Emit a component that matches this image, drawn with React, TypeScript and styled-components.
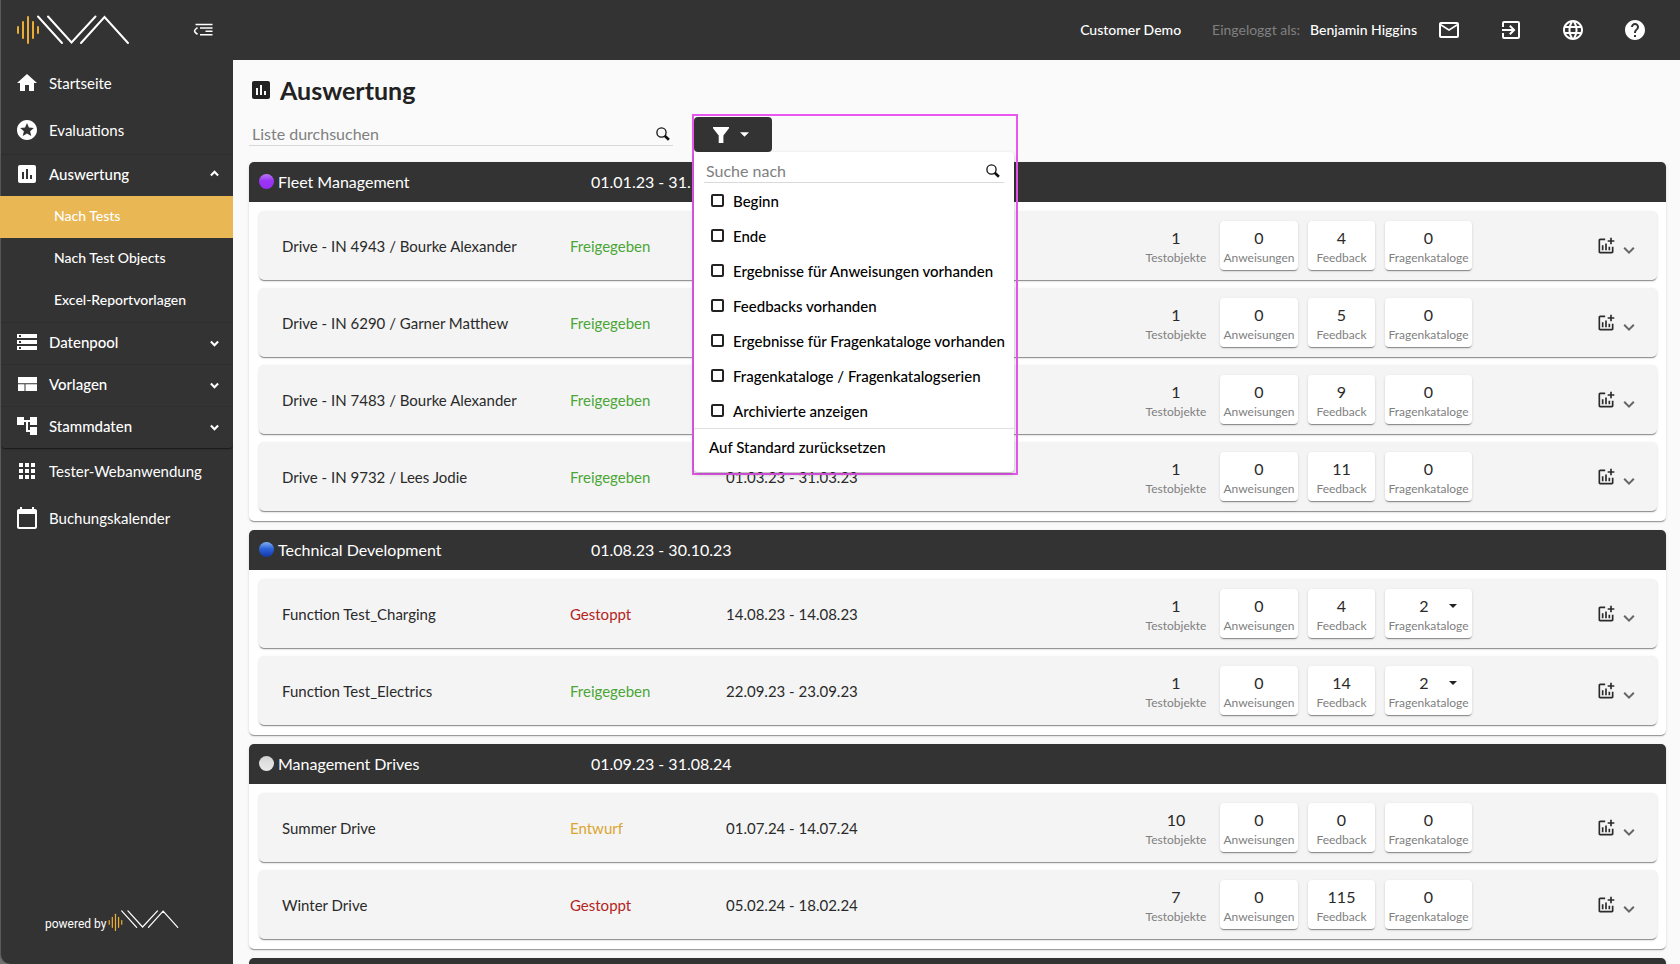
import React from 'react';
import styled, { createGlobalStyle, css } from 'styled-components';
import {
  MdHome, MdStars, MdAssessment, MdStorage, MdAccountTree, MdApps, MdCalendarToday,
  MdMailOutline, MdExitToApp, MdLanguage, MdHelp, MdAddchart,
} from 'react-icons/md';

const dark = '#333333';
const accent = '#e9b754';

const GlobalStyle = createGlobalStyle`
  *, *::before, *::after { box-sizing: border-box; }
  body { margin: 0; background: #fafafa; }
  body, button, input, select { font-family: Lato, "Liberation Sans", sans-serif; }
  ul { list-style: none; margin: 0; padding: 0; }
  svg { display: block; flex: none; }
`;

const bareButton = css`
  border: 0;
  padding: 0;
  background: none;
  color: inherit;
  cursor: pointer;
`;

const Shell = styled.div`
  display: flex;
  height: 100vh;
  overflow: hidden;
  background: #707070;
`;

/* Sidebar */

const Sidebar = styled.aside`
  flex: none;
  width: 233px;
  display: flex;
  flex-direction: column;
  background: ${dark};
  color: #fff;
  border-left: 1px solid #5a5a5a;
  border-bottom-left-radius: 10px;
`;

const Brand = styled.div`
  display: flex;
  align-items: center;
  justify-content: space-between;
  height: 60px;
  padding: 0 20px 0 15px;
`;

const IconButton = styled.button`
  ${bareButton}
  display: flex;
`;

const NavLink = styled.a`
  display: flex;
  align-items: center;
  gap: 10px;
  height: 47px;
  padding: 0 0 2px 14px;
  color: #fff;
  font-size: 15px;
  text-decoration: none;
`;

const NavToggle = styled.button`
  ${bareButton}
  display: flex;
  align-items: center;
  gap: 10px;
  width: 100%;
  height: 42px;
  padding: 0 14px 3px 14px;
  font-size: 15px;
  font-weight: 500;
  border-top: 1px solid #2e2e2e;
  & > :last-child { margin-left: auto; }
`;

const Accordions = styled.div`
  border-radius: 0 0 4px 4px;
  box-shadow: 0 2px 1px -1px rgba(0, 0, 0, 0.4), 0 1px 2px rgba(0, 0, 0, 0.2);
`;

const SubLink = styled.a<{ $active?: boolean }>`
  display: flex;
  align-items: center;
  height: 42px;
  margin-left: -1px;
  padding: 0 0 3px 54px;
  color: #fff;
  font-size: 14px;
  font-weight: 500;
  text-decoration: none;
  background: ${p => (p.$active ? accent : 'transparent')};
`;

const PoweredBy = styled.footer`
  display: flex;
  align-items: flex-end;
  gap: 2px;
  margin-top: auto;
  padding: 0 0 32px 44px;
  font-size: 12px;
  line-height: 16px;
  font-family: Roboto, sans-serif;
`;

/* Top bar */

const Page = styled.div`
  flex: 1;
  min-width: 0;
  background: #fafafa;
`;

const TopBar = styled.header`
  display: flex;
  align-items: center;
  justify-content: flex-end;
  height: 60px;
  padding-right: 33px;
  background: ${dark};
  color: #fff;
`;

const Account = styled.div`
  display: flex;
  padding-bottom: 2px;
  font-size: 14px;
  font-weight: 500;
`;

const Customer = styled.span`
  margin-right: 31px;
`;

const LoginLabel = styled.span`
  margin-right: 10px;
  color: #808080;
  font-weight: 400;
`;

const TopIcons = styled.div`
  display: flex;
  gap: 38px;
  margin-left: 20px;
`;

/* Content */

const Main = styled.main`
  padding: 16px 14px 0 16px;
`;

const Title = styled.h1`
  display: flex;
  align-items: center;
  gap: 7px;
  height: 30px;
  margin: 0;
  padding-bottom: 2px;
  color: #222;
  font-size: 25px;
  font-weight: 700;
`;

const Toolbar = styled.div`
  display: flex;
  align-items: flex-end;
  gap: 21px;
  height: 46px;
  margin-bottom: 10px;
`;

const SearchField = styled.label`
  display: flex;
  align-items: center;
  height: 24px;
  border-bottom: 1px solid #d9d9d9;
`;

const ListSearch = styled(SearchField)`
  flex: 0 1 424px;
  margin-bottom: 6px;
  padding: 0 3px;
`;

const MenuSearch = styled(SearchField)`
  padding: 0 4px 0 2px;
`;

const MenuSearchPad = styled.div`
  padding: 7px 10px 0;
`;

const SearchInput = styled.input`
  flex: 1;
  min-width: 0;
  padding: 0;
  border: 0;
  outline: 0;
  background: none;
  font-size: 16px;
  &::placeholder { color: #808080; opacity: 1; }
`;

const FilterSlot = styled.div`
  position: relative;
  width: 78px;
  height: 35px;
`;

const FilterPopup = styled.div`
  position: absolute;
  z-index: 1;
  top: -3px;
  left: -2px;
  width: 326px;
  padding: 1px 2px 1px 0;
  border: 2px solid #e858f0;
`;

const FilterButton = styled.button`
  ${bareButton}
  display: flex;
  align-items: center;
  justify-content: center;
  gap: 11px;
  width: 78px;
  height: 35px;
  padding-right: 4px;
  border-radius: 4px;
  background: ${dark};
  color: #fff;
`;

const FilterMenu = styled.div`
  background: #fff;
  border-radius: 0 4px 4px 4px;
  box-shadow: 0 2px 4px rgba(0, 0, 0, 0.25);
`;

const FilterOption = styled.label`
  display: flex;
  align-items: center;
  gap: 9px;
  height: 35px;
  padding-left: 17px;
  font-size: 15px;
  font-weight: 500;
  color: #000;
`;

const Checkbox = styled.input`
  appearance: none;
  width: 13px;
  height: 13px;
  margin: 0;
  border: 2px solid #222;
  border-radius: 2px;
  &:checked { background: #222; }
`;

const ResetButton = styled.button`
  ${bareButton}
  display: block;
  width: 100%;
  height: 44px;
  padding: 0 0 8px 15px;
  border-top: 1px solid #e0e0e0;
  color: #000;
  font-size: 15px;
  font-weight: 500;
  text-align: left;
`;

const Group = styled.section`
  margin-bottom: 9px;
  background: #fff;
  border-radius: 5px;
  box-shadow: 0 2px 1px -1px rgba(0, 0, 0, 0.25), 0 1px 1px rgba(0, 0, 0, 0.14), 0 1px 3px rgba(0, 0, 0, 0.12);
`;

const GroupHeader = styled.header`
  display: grid;
  grid-template-columns: 332px 1fr;
  align-items: center;
  height: 40px;
  padding: 0 0 2px 10px;
  border-radius: 5px 5px 0 0;
  background: ${dark};
  color: #fff;
  font-size: 16px;
`;

const GroupName = styled.h2`
  display: flex;
  align-items: center;
  gap: 4px;
  margin: 0;
  font-size: 16px;
  font-weight: 400;
`;

const dots = {
  purple: 'linear-gradient(#b87af8, #9a35f6 45%, #962ef5)',
  blue: 'linear-gradient(#7fb2f5, #2b62d9 45%, #1737a8)',
  white: 'linear-gradient(#cfcfcf, #e0e0e0 45%, #e8e8e8)',
};

const Dot = styled.span<{ $tone: keyof typeof dots }>`
  width: 15px;
  height: 15px;
  border-radius: 50%;
  background: ${p => dots[p.$tone]};
`;

const Rows = styled.ul`
  display: flex;
  flex-direction: column;
  gap: 8px;
  padding: 9px 9px 10px 10px;
`;

const Row = styled.li`
  display: grid;
  grid-template-columns: 288px 156px minmax(0, 1fr) auto 185px;
  align-items: center;
  height: 69px;
  padding-left: 23px;
  border-radius: 5px;
  background: #f4f4f4;
  color: #2a2a2a;
  font-size: 15px;
  box-shadow: 0 2px 1px -1px rgba(0, 0, 0, 0.3), 0 1px 1px rgba(0, 0, 0, 0.14), 0 1px 3px rgba(0, 0, 0, 0.12);
`;

const statusColors = { Freigegeben: '#4ba636', Gestoppt: '#b3251d', Entwurf: '#dba52f' };
type StatusName = keyof typeof statusColors;

const Status = styled.span<{ $name: StatusName }>`
  color: ${p => statusColors[p.$name]};
`;

const Stats = styled.div`
  display: flex;
  gap: 10px;
`;

const statBox = css<{ $width: number }>`
  display: flex;
  flex-direction: column;
  align-items: center;
  width: ${p => p.$width}px;
  height: 49px;
  padding: 7px 0 0;
`;

const Stat = styled.div`
  ${statBox}
`;

const raised = css`
  border-radius: 4px;
  background: #fff;
  box-shadow: 0 2px 1px -1px rgba(0, 0, 0, 0.3), 0 1px 1px rgba(0, 0, 0, 0.14), 0 1px 3px rgba(0, 0, 0, 0.12);
`;

const StatButton = styled.button`
  ${bareButton}
  ${statBox}
  ${raised}
`;

const StatSelectBox = styled.label`
  ${statBox}
  ${raised}
  position: relative;
`;

const StatValue = styled.span`
  color: #2a2a2a;
  font-size: 16px;
  line-height: 20px;
`;

const StatLabel = styled.span`
  color: #808080;
  font-size: 12px;
  line-height: 20px;
`;

const StatSelect = styled.select`
  appearance: none;
  width: 100%;
  height: 20px;
  padding: 0 9px 0 0;
  border: 0;
  background: none;
  color: #2a2a2a;
  font-size: 16px;
  line-height: 20px;
  text-align: center;
  text-align-last: center;
`;

const SelectCaret = styled.span`
  position: absolute;
  top: 15px;
  right: 15px;
  color: #222;
  pointer-events: none;
`;

const Actions = styled.div`
  display: flex;
  align-items: center;
  justify-content: flex-end;
  gap: 7px;
  padding-right: 22px;
`;

const ExpandButton = styled.button`
  ${bareButton}
  display: flex;
  padding-top: 6px;
  color: #666;
`;

/* Drawings */

function Logo({ small }: { small?: boolean }) {
  const barCentre = small ? 35 : 30;
  const bars: [number, number][] = [[18, 3], [23, 8], [28, 13], [33, 8], [38, 3]];
  return (
    <svg
      width={small ? 71 : 114}
      height={small ? 23 : 32}
      viewBox={small ? '16 14 114 36' : '16 14 114 32'}
      fill="none"
      strokeWidth="2"
      strokeLinecap="round"
      role="img"
      aria-label="IVA"
    >
      <g stroke="#e9ac35">
        {bars.map(([x, h]) => <path key={x} d={`M${x} ${barCentre - h}V${barCentre + h}`} />)}
      </g>
      <path stroke="#fff" d="M38 16.5 62 43M48 16.5 71.5 42.500 95.500 16.500M81 43 104.500 17 128 43" />
    </svg>
  );
}

const CollapseIcon = () => (
  <svg width="20" height="14" viewBox="0 0 20 14" fill="none" stroke="currentColor" strokeWidth="1.600">
    <path d="M2.500 1.500H19.500M7 5H19.500M12.500 8.200H19.500M7 11.800H19.500M4.500 4.600C2.500 6 1.500 7 1.500 8 1.500 9 2.500 10 4.500 11.200" />
  </svg>
);

const SearchIcon = () => (
  <svg width="14" height="14" viewBox="0 0 14 14" fill="none" stroke="#111">
    <circle cx="5.500" cy="5.500" r="4.600" strokeWidth="1.300" />
    <path d="M8.700 8.700 12.900 12.700" strokeWidth="2.600" />
  </svg>
);

const FunnelIcon = () => (
  <svg width="16" height="16" viewBox="0 0 16 16" fill="currentColor">
    <path d="M0 0H16V1.200L10.400 8.500V16H5.700V8.500L0 1.200Z" />
  </svg>
);

const Caret = ({ width }: { width: number }) => (
  <svg width={width} height={width === 9 ? 5 : 4} viewBox="0 0 10 5" fill="currentColor">
    <path d="M0 0H10L5 5Z" />
  </svg>
);

const Chevron = ({ size, up }: { size: number; up?: boolean }) => (
  <svg width={size} height={size} viewBox="0 0 10 10" fill="none" stroke="currentColor" strokeWidth={size > 9 ? 1.7 : 2.4}>
    <path d={up ? 'M1 6 5 2 9 6' : 'M1 4 5 8 9 4'} />
  </svg>
);

const LayoutIcon = () => (
  <svg width="24" height="24" viewBox="0 0 24 24" fill="currentColor">
    <path d="M3 5H22V11.200H3ZM3 12.200H9.500V19H3ZM10.500 12.200H22V19H10.500Z" />
  </svg>
);

/* Data */

type Test = {
  name: string;
  status: StatusName;
  period: string;
  objects: number;
  feedback: number;
  catalogs: number;
};

const test = (name: string, status: StatusName, period: string, objects: number, feedback: number, catalogs = 0): Test =>
  ({ name, status, period, objects, feedback, catalogs });

const groups: { name: string; tone: keyof typeof dots; period: string; tests: Test[] }[] = [
  {
    name: 'Fleet Management', tone: 'purple', period: '01.01.23 - 31.12.23',
    tests: [
      test('Drive - IN 4943 / Bourke Alexander', 'Freigegeben', '', 1, 4),
      test('Drive - IN 6290 / Garner Matthew', 'Freigegeben', '', 1, 5),
      test('Drive - IN 7483 / Bourke Alexander', 'Freigegeben', '', 1, 9),
      test('Drive - IN 9732 / Lees Jodie', 'Freigegeben', '01.03.23 - 31.03.23', 1, 11),
    ],
  },
  {
    name: 'Technical Development', tone: 'blue', period: '01.08.23 - 30.10.23',
    tests: [
      test('Function Test_Charging', 'Gestoppt', '14.08.23 - 14.08.23', 1, 4, 2),
      test('Function Test_Electrics', 'Freigegeben', '22.09.23 - 23.09.23', 1, 14, 2),
    ],
  },
  {
    name: 'Management Drives', tone: 'white', period: '01.09.23 - 31.08.24',
    tests: [
      test('Summer Drive', 'Entwurf', '01.07.24 - 14.07.24', 10, 0),
      test('Winter Drive', 'Gestoppt', '05.02.24 - 18.02.24', 7, 115),
    ],
  },
];

const filters = [
  'Beginn',
  'Ende',
  'Ergebnisse für Anweisungen vorhanden',
  'Feedbacks vorhanden',
  'Ergebnisse für Fragenkataloge vorhanden',
  'Fragenkataloge / Fragenkatalogserien',
  'Archivierte anzeigen',
];

function TestRow({ item }: { item: Test }) {
  return (
    <Row>
      <span>{item.name}</span>
      <Status $name={item.status}>{item.status}</Status>
      <span>{item.period}</span>
      <Stats>
        <Stat $width={68}><StatValue>{item.objects}</StatValue><StatLabel>Testobjekte</StatLabel></Stat>
        <StatButton $width={78}><StatValue>0</StatValue><StatLabel>Anweisungen</StatLabel></StatButton>
        <StatButton $width={67}><StatValue>{item.feedback}</StatValue><StatLabel>Feedback</StatLabel></StatButton>
        {item.catalogs > 0 ? (
          <StatSelectBox $width={87}>
            <StatSelect><option>{item.catalogs}</option></StatSelect>
            <SelectCaret><Caret width={8} /></SelectCaret>
            <StatLabel>Fragenkataloge</StatLabel>
          </StatSelectBox>
        ) : (
          <StatButton $width={87}><StatValue>0</StatValue><StatLabel>Fragenkataloge</StatLabel></StatButton>
        )}
      </Stats>
      <Actions>
        <IconButton aria-label="Auswertung hinzufügen"><MdAddchart size={20} /></IconButton>
        <ExpandButton aria-label="Aufklappen"><Chevron size={12} /></ExpandButton>
      </Actions>
    </Row>
  );
}

export default function App() {
  return (
    <>
      <GlobalStyle />
      <Shell>
        <Sidebar>
          <Brand>
            <Logo />
            <IconButton aria-label="Menü einklappen"><CollapseIcon /></IconButton>
          </Brand>
          <nav>
            <NavLink href="#"><MdHome size={24} />Startseite</NavLink>
            <NavLink href="#"><MdStars size={24} />Evaluations</NavLink>
            <Accordions>
              <NavToggle><MdAssessment size={24} />Auswertung<Chevron size={9} up /></NavToggle>
              <SubLink href="#" $active>Nach Tests</SubLink>
              <SubLink href="#">Nach Test Objects</SubLink>
              <SubLink href="#">Excel-Reportvorlagen</SubLink>
              <NavToggle><MdStorage size={24} />Datenpool<Chevron size={9} /></NavToggle>
              <NavToggle><LayoutIcon />Vorlagen<Chevron size={9} /></NavToggle>
              <NavToggle><MdAccountTree size={24} />Stammdaten<Chevron size={9} /></NavToggle>
            </Accordions>
            <NavLink href="#"><MdApps size={24} />Tester-Webanwendung</NavLink>
            <NavLink href="#"><MdCalendarToday size={24} />Buchungskalender</NavLink>
          </nav>
          <PoweredBy>powered by <Logo small /></PoweredBy>
        </Sidebar>

        <Page>
          <TopBar>
            <Account>
              <Customer>Customer Demo</Customer>
              <LoginLabel>Eingeloggt als:</LoginLabel>
              <span>Benjamin Higgins</span>
            </Account>
            <TopIcons>
              <IconButton aria-label="Nachrichten"><MdMailOutline size={24} /></IconButton>
              <IconButton aria-label="Abmelden"><MdExitToApp size={24} /></IconButton>
              <IconButton aria-label="Sprache"><MdLanguage size={24} /></IconButton>
              <IconButton aria-label="Hilfe"><MdHelp size={24} /></IconButton>
            </TopIcons>
          </TopBar>

          <Main>
            <Title><MdAssessment size={24} />Auswertung</Title>
            <Toolbar>
              <ListSearch>
                <SearchInput placeholder="Liste durchsuchen" aria-label="Liste durchsuchen" />
                <SearchIcon />
              </ListSearch>
              <FilterSlot>
                <FilterPopup>
                  <FilterButton aria-label="Filter"><FunnelIcon /><Caret width={9} /></FilterButton>
                  <FilterMenu>
                    <MenuSearchPad>
                      <MenuSearch>
                        <SearchInput placeholder="Suche nach" aria-label="Suche nach" />
                        <SearchIcon />
                      </MenuSearch>
                    </MenuSearchPad>
                    {filters.map(f => (
                      <FilterOption key={f}><Checkbox type="checkbox" />{f}</FilterOption>
                    ))}
                    <ResetButton>Auf Standard zurücksetzen</ResetButton>
                  </FilterMenu>
                </FilterPopup>
              </FilterSlot>
            </Toolbar>

            {groups.map(g => (
              <Group key={g.name}>
                <GroupHeader>
                  <GroupName><Dot $tone={g.tone} />{g.name}</GroupName>
                  <span>{g.period}</span>
                </GroupHeader>
                <Rows>{g.tests.map(t => <TestRow key={t.name} item={t} />)}</Rows>
              </Group>
            ))}
            <Group><GroupHeader /></Group>
          </Main>
        </Page>
      </Shell>
    </>
  );
}
